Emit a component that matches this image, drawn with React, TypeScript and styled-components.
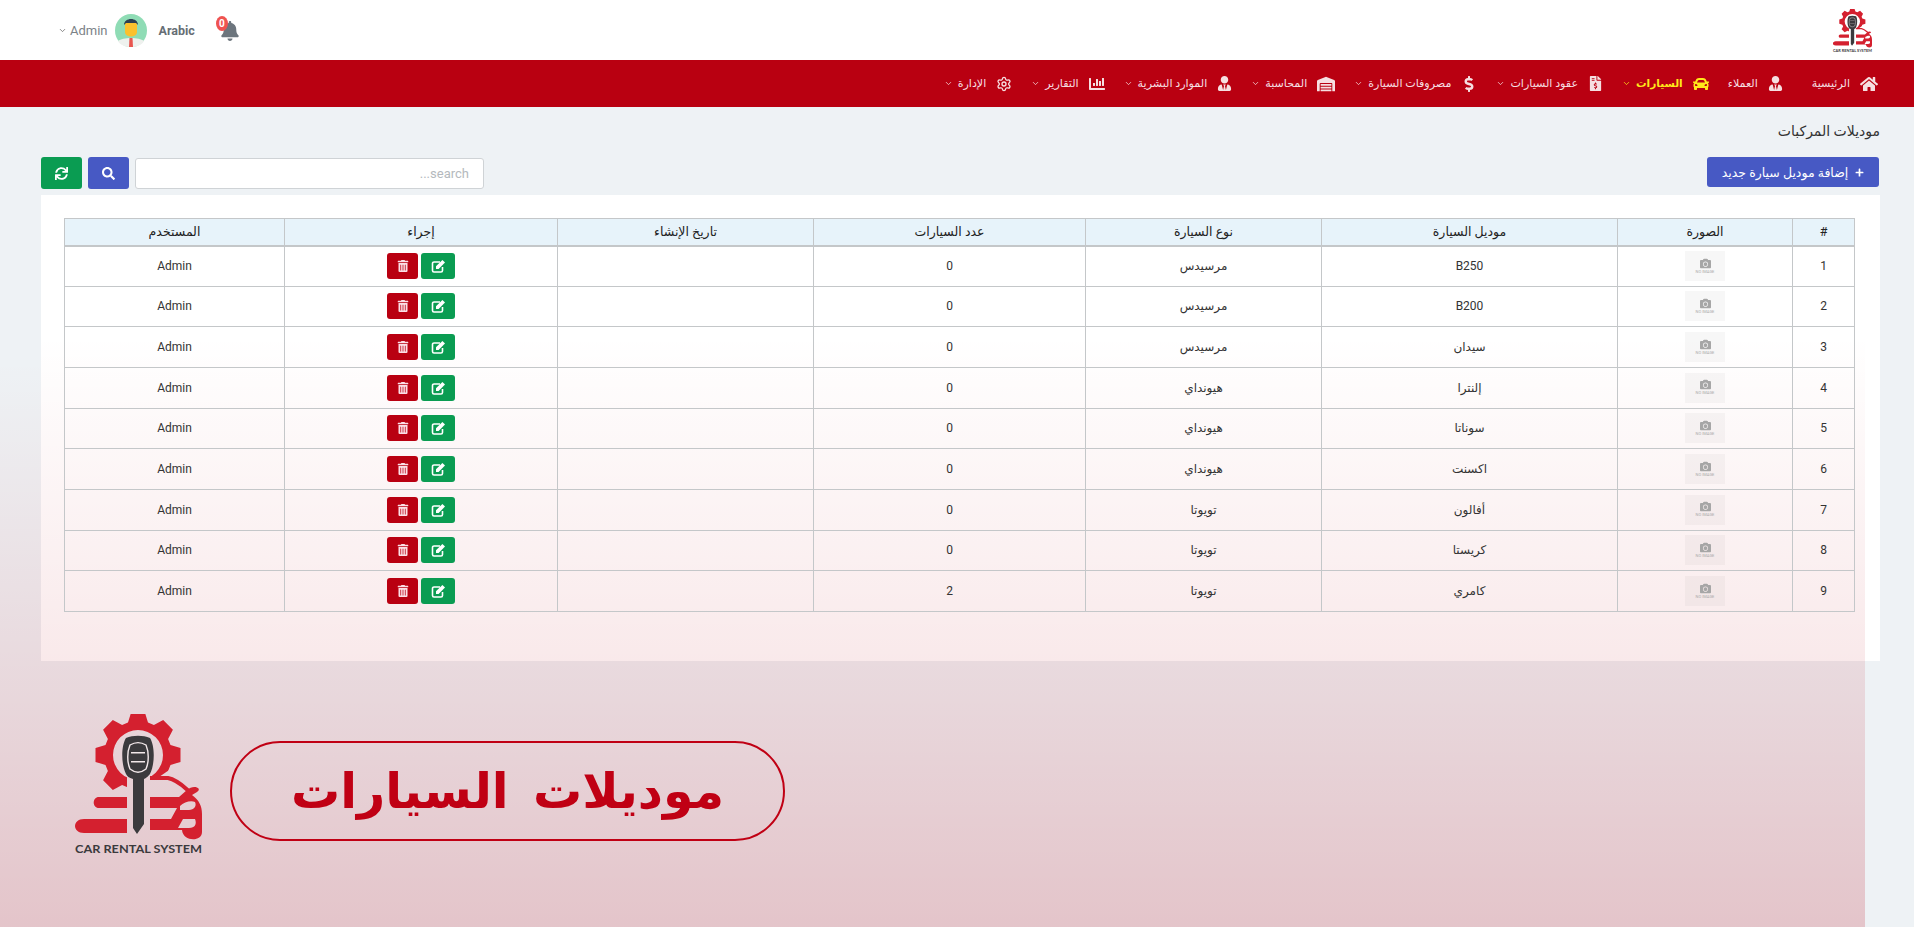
import React, { FC, ReactElement } from "react";
import styled, { createGlobalStyle } from "styled-components";
import {
  FaBell,
  FaCamera,
  FaCar,
  FaChartBar,
  FaDollarSign,
  FaFileInvoiceDollar,
  FaHome,
  FaPlus,
  FaSearch,
  FaSync,
  FaTrashAlt,
  FaUserTie,
  FaWarehouse,
} from "react-icons/fa";
import { ChevronDown, Settings } from "lucide-react";

const RED = "#b90011";
const GREEN = "#0a9c52";
const BLUE = "#4759c4";
const ARABIC = `"Roboto", "DejaVu Sans", sans-serif`;

const NAV_ITEMS = [
  { label: "الرئيسية", icon: <FaHome size={18} />, arrow: false },
  { label: "العملاء", icon: <FaUserTie size={15} />, arrow: false },
  { label: "السيارات", icon: <FaCar size={16} />, arrow: true, active: true },
  { label: "عقود السيارات", icon: <FaFileInvoiceDollar size={15} />, arrow: true },
  { label: "مصروفات السيارة", icon: <FaDollarSign size={16} />, arrow: true },
  { label: "المحاسبة", icon: <FaWarehouse size={18} />, arrow: true },
  { label: "الموارد البشرية", icon: <FaUserTie size={15} />, arrow: true },
  { label: "التقارير", icon: <FaChartBar size={16} />, arrow: true },
  { label: "الإدارة", icon: <Settings size={16} />, arrow: true },
];

const COLUMNS = [
  { title: "#", width: 62 },
  { title: "الصورة", width: 175 },
  { title: "موديل السيارة", width: 296 },
  { title: "نوع السيارة", width: 236 },
  { title: "عدد السيارات", width: 272 },
  { title: "تاريخ الإنشاء", width: 256 },
  { title: "إجراء", width: 273 },
  { title: "المستخدم", width: 220 },
];

const ROWS = [
  { model: "B250", type: "مرسيدس", count: 0 },
  { model: "B200", type: "مرسيدس", count: 0 },
  { model: "سيدان", type: "مرسيدس", count: 0 },
  { model: "إلنترا", type: "هيونداي", count: 0 },
  { model: "سوناتا", type: "هيونداي", count: 0 },
  { model: "اكسنت", type: "هيونداي", count: 0 },
  { model: "أفالون", type: "تويوتا", count: 0 },
  { model: "كريستا", type: "تويوتا", count: 0 },
  { model: "كامري", type: "تويوتا", count: 2 },
];

// gear outline with 8 teeth, centred on the key head
const gearPath = (() => {
  const cx = 63;
  const cy = 41;
  const points: string[] = [];
  for (let i = 0; i < 8; i++) {
    const base = (i * Math.PI) / 4 - Math.PI / 2;
    [
      [-0.3, 34],
      [-0.16, 43],
      [0.16, 43],
      [0.3, 34],
    ].forEach(([offset, radius]) => {
      const x = cx + radius * Math.cos(base + offset);
      const y = cy + radius * Math.sin(base + offset);
      points.push(`${x.toFixed(1)} ${y.toFixed(1)}`);
    });
  }
  return `M${points.join("L")}Z M${cx - 25} ${cy}a25 25 0 1 0 50 0a25 25 0 1 0 -50 0Z`;
})();

const Logo: FC<{ width: number }> = ({ width }): ReactElement => (
  <LogoSvg $width={width} viewBox="0 0 127 140">
    <defs>
      <clipPath id="gear-cut">
        <path d="M0 0H127V50L100 52L84 63H52V82H0Z" />
      </clipPath>
    </defs>
    <path d={gearPath} fill="#d4202f" fillRule="evenodd" clipPath="url(#gear-cut)" />
    <path d="M75 64H93C103 66 110 74 115 78" fill="none" stroke="#d4202f" strokeWidth="4" />
    <path
      fill="#d4202f"
      fillRule="evenodd"
      d="M24 83H52V94H24C17 94 17 83 24 83ZM75 83H104L112 76C118 70 128 74 122 78L117 81C124 86 127 92 127 100V118C127 128 108 128 107 116H75V105H96L102 94H75ZM9 105H52V119H9C-3 119 -3 105 9 105ZM105 92C109 88 116 86 120 88C122 92 119 96 114 96H105ZM103 114L108 105H120C122 110 120 114 114 114Z"
    />
    <path
      fill="#3b3a3d"
      d="M51 24C58 21 68 21 75 24C80 32 80 50 75 60C72 64 69 65 69 65V110L62 120L58 114V65C54 64 52 62 51 60C46 50 46 32 51 24Z"
    />
    <path
      fill="none"
      stroke="#f2e8ea"
      strokeWidth="1.4"
      d="M55 31C60 28 66 28 71 31C74 38 74 48 71 55C66 59 60 59 55 55C52 48 52 38 55 31Z"
    />
    <path fill="#f2e8ea" d="M56 38H70V39.4H56ZM56 47H70V48.4H56Z" />
    <LogoText x="0" y="139" textLength="127" lengthAdjust="spacingAndGlyphs">
      CAR RENTAL SYSTEM
    </LogoText>
  </LogoSvg>
);

const Avatar: FC = (): ReactElement => (
  <svg width="32" height="33" viewBox="0 0 32 33">
    <ellipse cx="16" cy="16.5" rx="16" ry="16.5" fill="#8fdcb5" />
    <path d="M3 27C8 23 24 23 29 27C25 35 7 35 3 27Z" fill="#eef1ee" />
    <path d="M14.5 24H17.5L18 33H14Z" fill="#e8564f" />
    <path d="M10 11C10 6 22 6 22 11V18C22 24 10 24 10 18Z" fill="#fbc02d" />
    <path d="M9 11C9 3 23 3 23 11L21 9H11Z" fill="#2c3e50" />
  </svg>
);

const EditIcon: FC = (): ReactElement => (
  <svg width="15" height="14" viewBox="0 0 15 14">
    <path d="M9 3H3a1.5 1.5 0 0 0-1.5 1.5v7A1.5 1.5 0 0 0 3 13h7a1.5 1.5 0 0 0 1.5-1.5V8" fill="none" stroke="currentColor" strokeWidth="1.6" />
    <path d="M5 7.2 11.4 1l2.6 2.6L7.6 10H5Z" fill="currentColor" />
  </svg>
);

const App: FC = (): ReactElement => {
  return (
    <Page>
      <GlobalStyle />
      <TopBar>
        <Logo width={39} />
        <UserArea>
          <BellBox>
            <FaBell size={20} />
            <BellBadge>0</BellBadge>
          </BellBox>
          <Language>Arabic</Language>
          <Avatar />
          <UserName>Admin</UserName>
          <ChevronDown size={9} color="#666" />
        </UserArea>
      </TopBar>
      <Nav>
        {NAV_ITEMS.map((item, index) => (
          <NavItem key={item.label} $active={item.active} $first={index === 0}>
            {item.icon}
            <NavLabel $active={item.active}>{item.label}</NavLabel>
            {item.arrow && <ChevronDown size={9} />}
          </NavItem>
        ))}
      </Nav>
      <Main>
        <PageTitle>موديلات المركبات</PageTitle>
        <Toolbar>
          <AddButton>
            <FaPlus size={9} />
            إضافة موديل سيارة جديد
          </AddButton>
          <SearchGroup>
            <SearchInput placeholder="search..." />
            <SquareButton $color={BLUE}>
              <FaSearch size={13} />
            </SquareButton>
            <SquareButton $color={GREEN}>
              <FaSync size={13} />
            </SquareButton>
          </SearchGroup>
        </Toolbar>
        <Card>
          <Table>
            <colgroup>
              {COLUMNS.map((column) => (
                <Column key={column.title} $width={column.width} />
              ))}
            </colgroup>
            <thead>
              <tr>
                {COLUMNS.map((column) => (
                  <HeadCell key={column.title}>{column.title}</HeadCell>
                ))}
              </tr>
            </thead>
            <tbody>
              {ROWS.map((row, index) => (
                <tr key={row.model}>
                  <Cell>{index + 1}</Cell>
                  <Cell>
                    <NoImage>
                      <FaCamera size={11} />
                      <NoImageText>NO IMAGE</NoImageText>
                    </NoImage>
                  </Cell>
                  <Cell>{row.model}</Cell>
                  <Cell>{row.type}</Cell>
                  <Cell>{row.count}</Cell>
                  <Cell />
                  <Cell>
                    <Actions>
                      <EditButton>
                        <EditIcon />
                      </EditButton>
                      <DeleteButton>
                        <FaTrashAlt size={12} />
                      </DeleteButton>
                    </Actions>
                  </Cell>
                  <Cell>Admin</Cell>
                </tr>
              ))}
            </tbody>
          </Table>
        </Card>
        <Banner>
          <TitlePill>موديلات  السيارات</TitlePill>
          <Logo width={127} />
        </Banner>
      </Main>
    </Page>
  );
};

export default App;

const GlobalStyle = createGlobalStyle`
  html, body {
    margin: 0;
    padding: 0;
    background: #eef2f5;
  }
  * {
    box-sizing: border-box;
  }
`;

const Page = styled.div`
  direction: rtl;
  display: flex;
  flex-direction: column;
  height: 927px;
  overflow: hidden;
  font-family: ${ARABIC};
  color: #333;
`;

const TopBar = styled.header`
  display: flex;
  justify-content: space-between;
  align-items: center;
  height: 60px;
  flex: none;
  padding: 0 42px 0 58px;
  background: #fff;
`;

const LogoSvg = styled.svg<{ $width: number }>`
  display: block;
  flex: none;
  width: ${(p) => p.$width}px;
  height: auto;
  overflow: visible;
`;

const LogoText = styled.text`
  direction: ltr;
  font-family: "Lato", "Liberation Sans", sans-serif;
  font-size: 12px;
  font-weight: 700;
  fill: #3b3a3d;
`;

const UserArea = styled.div`
  display: flex;
  align-items: center;
`;

const BellBox = styled.div`
  position: relative;
  display: flex;
  color: #6c757d;
  margin-left: 25px;
  margin-top: 1px;
`;

const BellBadge = styled.span`
  position: absolute;
  top: -5px;
  right: 12px;
  width: 12px;
  height: 15px;
  border-radius: 50%;
  background: #ef5350;
  color: #fff;
  font: 700 10px/15px "Roboto", sans-serif;
  text-align: center;
`;

const Language = styled.span`
  font: 700 12.5px "Roboto", sans-serif;
  color: #666e75;
  margin-left: 12px;
`;

const UserName = styled.span`
  font: 400 13px "Roboto", sans-serif;
  color: #7b8288;
  margin: 0 7px 0 3px;
`;

const Nav = styled.nav`
  display: flex;
  align-items: center;
  gap: 19px;
  height: 47px;
  flex: none;
  padding: 0 36px;
  background: ${RED};
`;

const NavItem = styled.div<{ $active?: boolean; $first?: boolean }>`
  display: flex;
  align-items: center;
  gap: 5px;
  margin-left: ${(p) => (p.$first ? 10 : 0)}px;
  color: ${(p) => (p.$active ? "#ffe81a" : "#f6dfe1")};
`;

const NavLabel = styled.span<{ $active?: boolean }>`
  font-size: ${(p) => (p.$active ? 10.5 : 11.1)}px;
  font-weight: ${(p) => (p.$active ? 700 : 400)};
  margin-right: 5px;
`;

const Main = styled.main`
  flex: 1;
  display: flex;
  flex-direction: column;
  padding: 16px 34px 0 34px;
  background: linear-gradient(
      to bottom,
      rgba(185, 0, 17, 0) 31%,
      rgba(185, 0, 17, 0.19) 100%
    )
    left top / 1865px 100% no-repeat;
`;

const PageTitle = styled.h1`
  margin: 0;
  height: 34px;
  font-size: 14px;
  font-weight: 400;
  color: #333;
`;

const Toolbar = styled.div`
  display: flex;
  justify-content: space-between;
  align-items: flex-start;
  height: 38px;
  padding-right: 1px;
  margin-left: 7px;
`;

const AddButton = styled.button`
  display: flex;
  align-items: center;
  gap: 7px;
  width: 172px;
  height: 30px;
  justify-content: center;
  border: 0;
  border-radius: 3px;
  background: ${BLUE};
  color: #fff;
  font-family: ${ARABIC};
  font-size: 12.5px;
  white-space: nowrap;
`;

const SearchGroup = styled.div`
  display: flex;
  align-items: center;
  gap: 6px;
`;

const SearchInput = styled.input`
  width: 349px;
  height: 31px;
  padding: 0 14px;
  border: 1px solid #cfd3d6;
  border-radius: 3px;
  background: #fff;
  direction: rtl;
  font: 400 13px "Roboto", sans-serif;
  &::placeholder {
    color: #b4b9bd;
  }
`;

const SquareButton = styled.button<{ $color: string }>`
  display: flex;
  align-items: center;
  justify-content: center;
  width: 41px;
  height: 32px;
  border: 0;
  border-radius: 3px;
  background: ${(p) => p.$color};
  color: #fff;
`;

const Card = styled.section`
  height: 466px;
  flex: none;
  margin-left: 7px;
  padding: 23px 25px 0 25px;
  background: linear-gradient(
        to bottom,
        rgba(185, 0, 17, 0) 30%,
        rgba(185, 0, 17, 0.085) 100%
      )
      left top / calc(100% - 15px) 100% no-repeat,
    #fff;
`;

const Table = styled.table`
  width: 100%;
  border-collapse: collapse;
  table-layout: fixed;
  font-size: 12px;
`;

const Column = styled.col<{ $width: number }>`
  width: ${(p) => p.$width}px;
`;

const HeadCell = styled.th`
  height: 27px;
  padding: 0;
  border: 1px solid #c4c7c9;
  border-bottom-width: 2px;
  background: #e7f3fa;
  font-weight: 400;
  font-size: 12.5px;
  color: #222;
`;

const Cell = styled.td`
  height: 40.67px;
  padding: 0;
  border: 1px solid #c4c7c9;
  text-align: center;
  color: #333;
`;

const NoImage = styled.div`
  display: inline-flex;
  flex-direction: column;
  align-items: center;
  justify-content: center;
  width: 40px;
  height: 30px;
  vertical-align: middle;
  background: rgba(120, 120, 120, 0.06);
  color: #a6a6a6;
`;

const NoImageText = styled.span`
  font: 400 4px "Roboto", sans-serif;
  line-height: 6px;
  color: #aaa;
`;

const Actions = styled.div`
  display: flex;
  justify-content: center;
  gap: 3px;
`;

const EditButton = styled.div`
  display: flex;
  align-items: center;
  justify-content: center;
  width: 34px;
  height: 26px;
  border-radius: 3px;
  background: ${GREEN};
  color: #fff;
`;

const DeleteButton = styled(EditButton)`
  width: 31px;
  background: ${RED};
  color: #fbdfe6;
`;

const Banner = styled.div`
  display: flex;
  align-items: center;
  justify-content: flex-end;
  gap: 28px;
  margin-top: 53px;
  padding-left: 41px;
`;

const TitlePill = styled.div`
  display: flex;
  align-items: center;
  justify-content: center;
  width: 555px;
  height: 100px;
  margin-top: 14px;
  border: 2px solid #c00014;
  border-radius: 50px;
  color: #c00014;
  white-space: pre;
  font-size: 49px;
  font-weight: 700;
`;
